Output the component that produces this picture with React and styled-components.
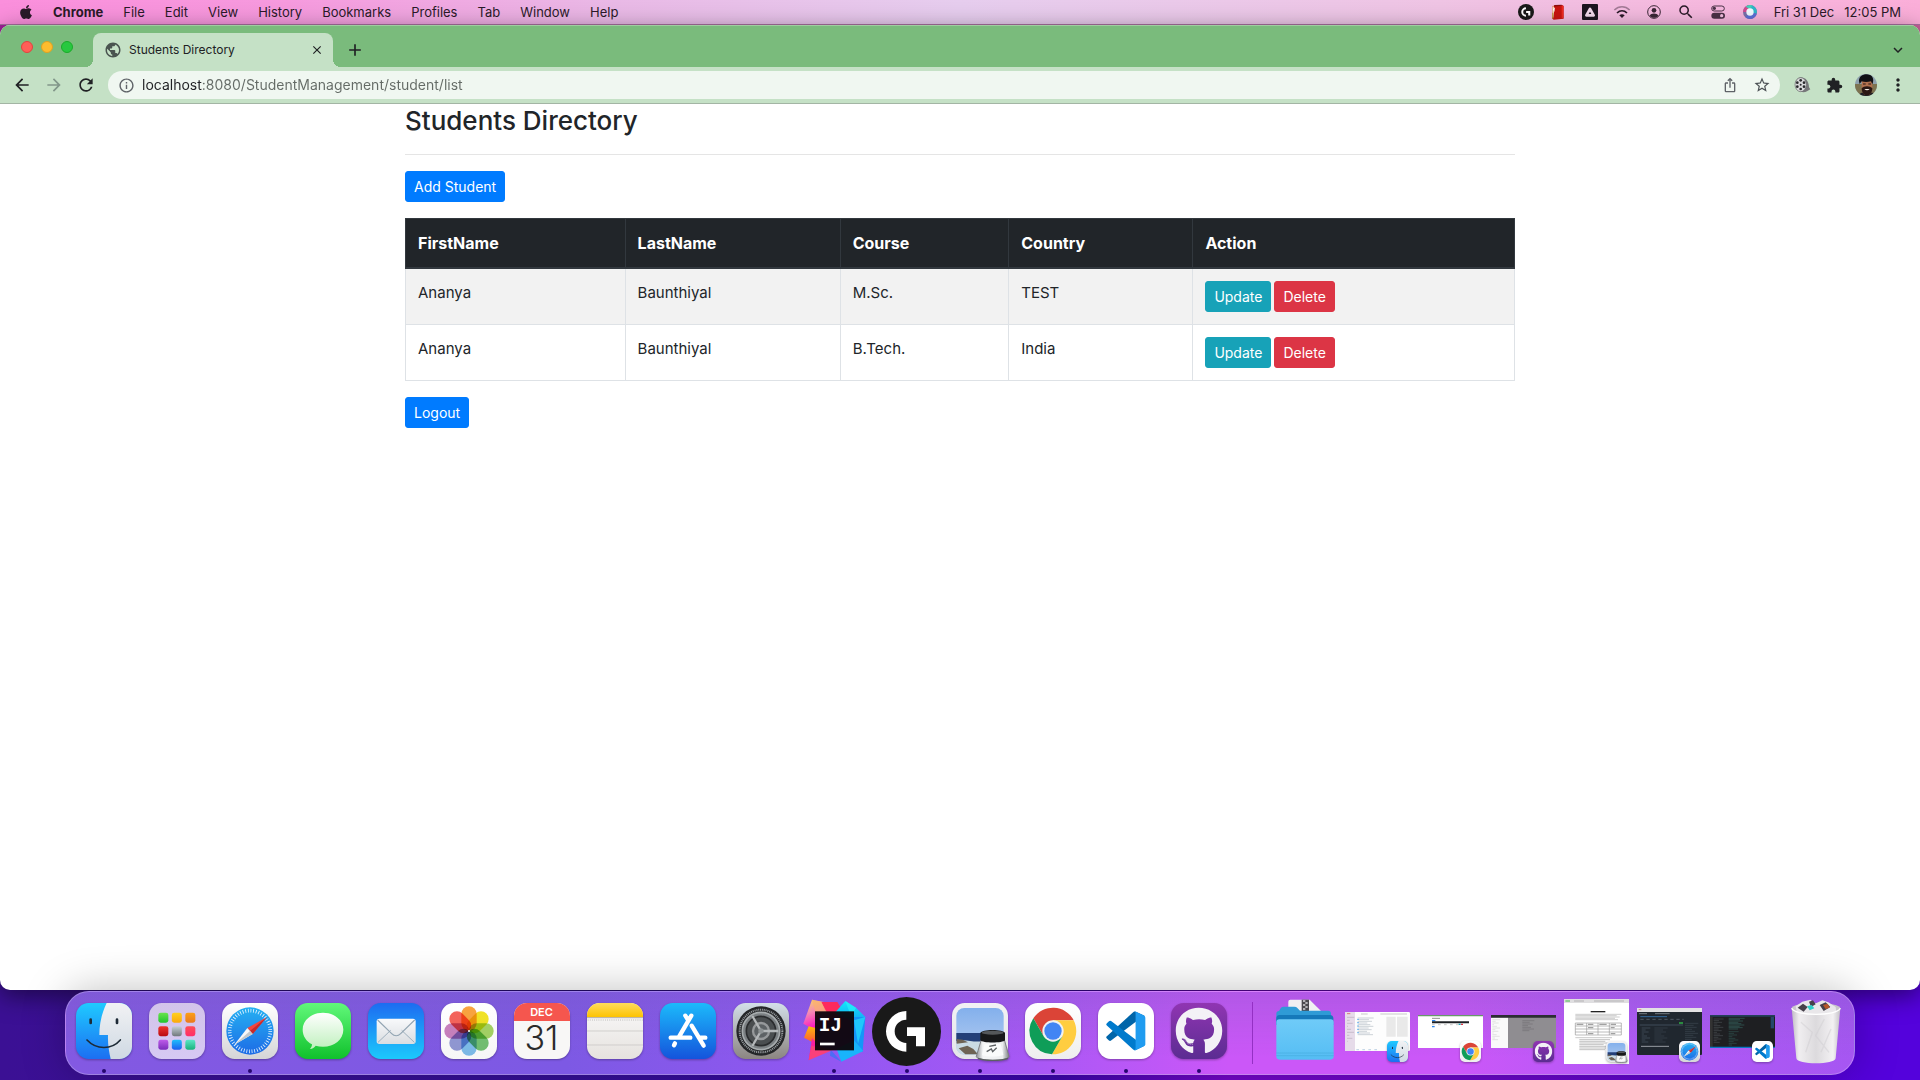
import React from 'react';
import styled, { createGlobalStyle } from 'styled-components';
import { FaApple, FaGithub } from 'react-icons/fa';
import {
  MdAdd, MdArrowBack, MdArrowForward, MdClose, MdExpandMore, MdExtension, MdInfoOutline,
  MdIosShare, MdMoreVert, MdPublic, MdRefresh, MdSearch, MdStarBorder,
} from 'react-icons/md';

const sans = '"Inter", "Liberation Sans", sans-serif';

const GlobalStyle = createGlobalStyle`
  *, *::before, *::after { box-sizing: border-box; }
  body { margin: 0; font-family: ${sans}; color: #212529; }
  button, input { font: inherit; color: inherit; margin: 0; }
  svg { display: block; }
`;

/* ---------- desktop ---------- */

const Desktop = styled.div`
  display: flex;
  flex-direction: column;
  min-height: 100vh;
  overflow: hidden;
  background:
    linear-gradient(90deg, #a0219a, #b8488c 60%, #c8609a) 0 0 / 100% 60px no-repeat,
    linear-gradient(90deg, #3b1094 0%, #35109a 30%, #3c06ae 55%, #7606cc 64%, #6a07cc 80%, #5402dc 97%);
`;

const PlainButton = styled.button`
  display: flex;
  align-items: center;
  justify-content: center;
  flex: none;
  padding: 0;
  border: 0;
  background: none;
`;

/* ---------- menu bar ---------- */

const MenuBar = styled.header`
  display: flex;
  align-items: center;
  justify-content: space-between;
  height: 25px;
  padding: 0 19px 1px 18px;
  border-bottom: 1px solid #a8709f;
  font-size: 13px;
  line-height: 16px;
  color: #2a1a28;
  background: linear-gradient(90deg, #fb8fdc 0%, #f69ade 15%, #e9b9e6 32%, #e6cdee 50%, #efc4e4 75%, #fbaed9 100%);
`;

const MenuGroup = styled.div`
  display: flex;
  align-items: center;
  gap: ${(p) => p.$gap}px;
`;

const MenuItem = styled(PlainButton)`
  font-weight: ${(p) => (p.$strong ? 700 : 400)};
`;

const StatusButton = styled(PlainButton)`
  width: 32px;
  height: 23px;
`;

/* ---------- browser ---------- */

const Browser = styled.div`
  display: flex;
  flex-direction: column;
  flex: 1;
  position: relative;
  border-radius: 10px;
  overflow: hidden;
  background: #fff;
  box-shadow: 0 6px 24px rgba(0, 0, 0, 0.5);
`;

const TabStrip = styled.div`
  display: flex;
  align-items: flex-end;
  height: 42px;
  padding: 0 12px 0 21px;
  border-top: 1px solid #9fcda1;
  background: #7abb7c;
  color: #202124;
`;

const Lights = styled.div`
  display: flex;
  gap: 8px;
  height: 41px;
  align-items: center;
  margin-right: 20px;
`;

const Light = styled(PlainButton)`
  width: 12px;
  height: 12px;
  border-radius: 50%;
  border: 1px solid ${(p) => p.$edge};
  background: ${(p) => p.$fill};
`;

const Tab = styled.div`
  position: relative;
  display: flex;
  align-items: center;
  width: 240px;
  height: 34px;
  padding: 0 8px 0 11px;
  border-radius: 8px 8px 0 0;
  background: #c5e1c6;
  font-size: 12px;
  line-height: 16px;
  &::before, &::after {
    content: '';
    position: absolute;
    bottom: 0;
    width: 8px;
    height: 8px;
  }
  &::before { left: -8px; background: radial-gradient(circle at 0 0, transparent 8px, #c5e1c6 8px); }
  &::after { right: -8px; background: radial-gradient(circle at 100% 0, transparent 8px, #c5e1c6 8px); }
`;

const TabTitle = styled.span`
  flex: 1;
  margin-left: 7px;
`;

const TabButton = styled(PlainButton)`
  width: ${(p) => p.$width || 16}px;
  height: 34px;
  margin-left: ${(p) => p.$push || 0};
`;

const Toolbar = styled.form`
  display: flex;
  align-items: center;
  height: 37px;
  padding: 0 6px;
  border-bottom: 1px solid #a3b5a4;
  background: #c5e1c6;
  color: #202124;
`;

const ToolButton = styled(PlainButton)`
  width: 32px;
  height: 28px;
  color: ${(p) => p.$tone || '#202124'};
`;

const Omnibox = styled.div`
  display: flex;
  align-items: center;
  flex: 1;
  height: 28px;
  margin: 0 6px;
  padding: 0 2px;
  border-radius: 14px;
  background: #f0f7f1;
`;

const Address = styled.input`
  flex: 1;
  min-width: 0;
  height: 20px;
  padding: 0;
  border: 0;
  outline: 0;
  font-size: 14px;
  line-height: 20px;
  color: #646b66;
  background: linear-gradient(90deg, #202124 60px, #646b66 60px);
  -webkit-background-clip: text;
  background-clip: text;
  -webkit-text-fill-color: transparent;
`;

/* ---------- page ---------- */

const Page = styled.main`
  width: 100%;
  max-width: 1140px;
  margin: 0 auto;
  padding: 0 15px;
  font-size: 16px;
  line-height: 24px;
`;

const Title = styled.h3`
  margin: 0;
  font-size: 26px;
  font-weight: 500;
  line-height: 34px;
`;

const Rule = styled.hr`
  margin: 16px 0;
  border: 0;
  border-top: 1px solid #e5e5e5;
`;

const tones = { primary: '#007bff', info: '#17a2b8', danger: '#dc3545' };

const ActionButton = styled.button`
  display: block;
  padding: 4px 8px;
  border: 1px solid ${(p) => tones[p.$tone]};
  border-radius: 3px;
  background: ${(p) => tones[p.$tone]};
  color: #fff;
  font-size: 14px;
  line-height: 21px;
`;

const Table = styled.table`
  width: 100%;
  margin: 16px 0;
  table-layout: fixed;
  border-collapse: collapse;
  border: 1px solid #dee2e6;
  thead th {
    padding: 12px;
    border: 1px solid #32383e;
    border-bottom-width: 2px;
    background: #212529;
    color: #fff;
    font-weight: 700;
    text-align: left;
  }
  tbody td {
    padding: 12px;
    border: 1px solid #dee2e6;
    font-size: 15px;
    vertical-align: top;
  }
  tbody tr:nth-child(odd) { background: #f2f2f2; }
`;

const Col = styled.col`
  width: ${(p) => p.$share}%;
`;

const Actions = styled.div`
  display: flex;
  gap: 3px;
`;

/* ---------- dock ---------- */

const DockArea = styled.footer`
  display: flex;
  justify-content: center;
  position: relative;
  padding: 1px 0 5px;
`;

const Dock = styled.nav`
  display: flex;
  height: 84px;
  padding: 0 2px 0 1px;
  border: 1px solid rgba(255, 255, 255, 0.25);
  border-radius: 24px;
  background:
    linear-gradient(180deg, rgba(120, 90, 190, 0.3), rgba(140, 90, 255, 0) 80%),
    linear-gradient(90deg, #8359e2 0%, #7d59e4 28%, #9257f2 43%, #a858f5 54%, #cb57f8 65%, #cb57f8 78%, #b159f6 88%, #a656f2 100%);
  box-shadow: 0 0 44px rgba(0, 0, 0, 0.26);
`;

const DockItem = styled(PlainButton)`
  position: relative;
  width: 73px;
  height: 78px;
`;

const RunningDot = styled.span`
  position: absolute;
  bottom: -3px;
  left: 35px;
  width: 4px;
  height: 4px;
  border-radius: 50%;
  background: #25066e;
`;

const Badge = styled.span`
  position: absolute;
  left: 46px;
  top: 49px;
`;

const Divider = styled.span`
  width: 1px;
  height: 62px;
  margin: 10px 15px 0 17px;
  background: #9430c4;
`;

const CalendarTile = styled.span`
  display: flex;
  flex-direction: column;
  width: 56px;
  height: 56px;
  border-radius: 13px;
  overflow: hidden;
  background: #f8f7f6;
  box-shadow: 0 1px 2px rgba(0, 0, 0, 0.3);
  text-align: center;
`;

const CalendarMonth = styled.span`
  height: 18px;
  background: #f5564e;
  color: #fff;
  font-size: 11px;
  font-weight: 600;
  line-height: 19px;
`;

const CalendarDay = styled.span`
  color: #2b2b2b;
  font-size: 34px;
  font-weight: 300;
  line-height: 34px;
`;

/* ---------- drawings ---------- */

const Grad = ({ id, from, to }) => (
  <linearGradient id={id} x1="0" y1="0" x2="0" y2="1">
    <stop offset="0" stopColor={from} />
    <stop offset="1" stopColor={to} />
  </linearGradient>
);

const TileSvg = styled.svg`
  overflow: visible;
  filter: drop-shadow(0 1px 1px rgba(0, 0, 0, 0.3));
`;

function Tile({ size = 56, id, from, to, children }) {
  return (
    <TileSvg width={size} height={size} viewBox="0 0 168 168" aria-hidden="true">
      <defs><Grad id={id} from={from} to={to} /></defs>
      <rect width="168" height="168" rx="38" fill={`url(#${id})`} />
      {children}
    </TileSvg>
  );
}

const Finder = ({ size }) => (
  <Tile size={size} id="finder" from="#1fcaff" to="#1c6ff2">
    <defs><Grad id="finderFace" from="#f1f2f4" to="#cfd9e3" /></defs>
    <path d="M92 0C78 28 70 62 70 96h26c-1 26 3 50 8 72h26a38 38 0 0 0 38-38V38A38 38 0 0 0 130 0z" fill="url(#finderFace)" />
    <rect x="40" y="46" width="8" height="18" rx="4" fill="#1d2a36" />
    <rect x="119" y="46" width="8" height="18" rx="4" fill="#1d2a36" />
    <path d="M33 111c28 30 74 30 100 0" fill="none" stroke="#1d2a36" strokeWidth="5" strokeLinecap="round" />
  </Tile>
);

const padColors = [
  ['#6be34f', '#22c52e'], ['#ffd022', '#fba90a'], ['#fca016', '#ea7a1e'],
  ['#f0342d', '#b80c12'], ['#c6d0d6', '#70787c'], ['#ff4d55', '#ff2d6a'],
  ['#bf5cea', '#7a2dbb'], ['#1fc0fb', '#1d5ff0'], ['#5be6c8', '#19b37c'],
];

const Launchpad = () => (
  <Tile id="pad" from="#d3c4ea" to="#d6c9f3">
    {padColors.map(([a, b], i) => (
      <g key={a}>
        <defs><Grad id={`pad${i}`} from={a} to={b} /></defs>
        <rect x={28 + (i % 3) * 40.5} y={29 + Math.floor(i / 3) * 40.5} width="30" height="30" rx="7" fill={`url(#pad${i})`} />
      </g>
    ))}
  </Tile>
);

const Safari = ({ size }) => (
  <Tile size={size} id="safari" from="#ffffff" to="#d5d5d7">
    <defs><Grad id="safariSea" from="#25b0f2" to="#1d6be6" /></defs>
    <circle cx="84" cy="84" r="71" fill="url(#safariSea)" />
    <circle cx="84" cy="84" r="61" fill="none" stroke="#e8f4ff" strokeWidth="11" strokeDasharray="2.4 5.58" />
    <path d="M134 43 76 75l16 18z" fill="#f2453d" />
    <path d="M134 43 84 84l8 9z" fill="#c62a2c" />
    <path d="M37 125 76 75l16 18z" fill="#f6f7f8" />
    <path d="M37 125 84 84l8 9z" fill="#c2c8cc" />
  </Tile>
);

const Messages = () => (
  <Tile id="msg" from="#61f87a" to="#10c12c">
    <defs><Grad id="msgBubble" from="#ffffff" to="#bff0bd" /></defs>
    <path d="M84 29c34 0 61 22 61 51s-27 51-61 51c-8 0-15-1-22-3-4 5-9 9-17 10 4-4 6-9 6-14-17-9-28-25-28-44 0-29 27-51 61-51z" fill="url(#msgBubble)" />
  </Tile>
);

const Mail = () => (
  <Tile id="mail" from="#1d6cf1" to="#1cc9fc">
    <defs><Grad id="mailPaper" from="#f8f9fb" to="#dadde1" /></defs>
    <rect x="26" y="47" width="117" height="76" rx="8" fill="url(#mailPaper)" />
    <path d="M30 118 68 82M139 118 101 82" stroke="#9fb0bd" strokeWidth="3" fill="none" />
    <path d="m29 51 42 41c8 8 19 8 27 0l42-41" stroke="#93a5b3" strokeWidth="3.5" fill="none" />
  </Tile>
);

const petals = ['#f8941d', '#f0df00', '#95cc4a', '#5bb85a', '#68b3ea', '#8088cf', '#c06cb4', '#f4483f'];

const Petal = styled.rect`
  mix-blend-mode: multiply;
`;

const Photos = () => (
  <Tile id="photos" from="#ffffff" to="#f6f6f6">
    {petals.map((c, i) => (
      <Petal key={c} x="61" y="10" width="46" height="74" rx="23" fill={c} opacity="0.85" transform={`rotate(${i * 45} 84 84)`} />
    ))}
    <circle cx="84" cy="84" r="3" fill="#fff" />
  </Tile>
);

const Calendar = () => (
  <CalendarTile>
    <CalendarMonth>DEC</CalendarMonth>
    <CalendarDay>31</CalendarDay>
  </CalendarTile>
);

const Notes = () => (
  <Tile id="notes" from="#fafafa" to="#e6e2de">
    <defs><Grad id="notesTop" from="#ffdc5c" to="#fdc300" /></defs>
    <path d="M0 42V38A38 38 0 0 1 38 0h92a38 38 0 0 1 38 38v4z" fill="url(#notesTop)" />
    <path d="M0 44h168" stroke="#b5aa98" strokeWidth="3" />
    <path d="M2 51h166" stroke="#a8a6a3" strokeWidth="2.5" strokeDasharray="2.5 4" />
    <path d="M0 84h168M0 126h168" stroke="#cbc9c6" strokeWidth="2.5" />
  </Tile>
);

const AppStore = () => (
  <Tile id="store" from="#1cbafb" to="#1454dc">
    <g stroke="#fff" strokeWidth="13" strokeLinecap="round" fill="none">
      <path d="M94 38 56 103M76 38l7 11M95 68l36 60M32 104h59M120 104h16M45 121l-3 6" />
    </g>
  </Tile>
);

const Settings = () => (
  <Tile id="prefs" from="#d3dfe8" to="#8b8581">
    <circle cx="84" cy="84" r="74" fill="#242628" />
    <circle cx="84" cy="84" r="64" fill="none" stroke="#9a9fa2" strokeWidth="6" strokeDasharray="3 2.6" />
    <circle cx="84" cy="84" r="56" fill="#7b8083" stroke="#a7acae" strokeWidth="5" />
    <circle cx="84" cy="84" r="44" fill="#4a4e50" stroke="#2a2c2e" strokeWidth="5" />
    <circle cx="84" cy="84" r="24" fill="#5d6265" stroke="#96999b" strokeWidth="7" />
    <path d="M84 84h52M84 84 58 39M84 84l-26 45" stroke="#b3b7b9" strokeWidth="7" />
    <circle cx="84" cy="84" r="8" fill="#8e9395" />
  </Tile>
);

const IntelliJ = () => (
  <svg width="68" height="68" viewBox="0 110 204 204" aria-hidden="true">
    <defs>
      <linearGradient id="ijPink" x1="0" y1="0" x2="0.4" y2="1">
        <stop offset="0" stopColor="#fbdc5a" /><stop offset="0.4" stopColor="#f58ab4" /><stop offset="0.8" stopColor="#fb1fc0" />
      </linearGradient>
      <Grad id="ijBlue" from="#12e8f8" to="#12a8f8" />
      <Grad id="ijOrange" from="#ffb80a" to="#ff4a3c" />
    </defs>
    <path d="m36 118 40 8 40 40-60 50-46-26z" fill="url(#ijPink)" />
    <path d="m64 125 48 0 18 30H78z" fill="#fe2a5c" />
    <path d="m36 118 28 7 16 30H46z" fill="#fbb06a" opacity="0.7" />
    <path d="m104 158 32-36 32 20 28 28-34 14z" fill="url(#ijBlue)" />
    <path d="m136 122 32 20-14 28z" fill="#26f0fa" opacity="0.7" />
    <path d="m150 170 46 0-8 104-26 0z" fill="#1496f8" />
    <path d="m162 180 34-10-22 80z" fill="#1fc8fb" />
    <path d="m162 240 28 32-66 32-14-38z" fill="#18b4fb" />
    <path d="m12 232 14-34 24 6 4 50z" fill="url(#ijOrange)" />
    <path d="m36 234 30 30-40 36z" fill="#fb1fa0" />
    <path d="m34 256 66 12-74 32z" fill="#f9407a" />
    <path d="m92 268 32 36-34-18z" fill="#4d6cf5" />
    <rect x="45" y="153" width="117" height="117" fill="#0c0508" opacity="0.95" />
    <text x="56" y="212" fill="#fff" fontFamily="'Liberation Mono', monospace" fontWeight="700" fontSize="58">IJ</text>
    <path d="M60 247h44v8H60z" fill="#fff" />
  </svg>
);

const LogitechG = ({ size }) => (
  <svg width={size} height={size} viewBox="219 108 207 207" aria-hidden="true">
    <circle cx="322.500" cy="211.500" r="103.500" fill="#191919" />
    <path d="M322 150a61 61 0 0 0 0 122v-26a35 35 0 0 1 0-70zM324 199h54v57h-27v-31h-27z" fill="#fff" />
  </svg>
);

const Preview = ({ size }) => (
  <Tile size={size} id="preview" from="#f2f2f4" to="#e4e5e8">
    <defs>
      <Grad id="previewSky" from="#83b0ec" to="#b5cdf0" />
      <linearGradient id="glass" x1="0" y1="0" x2="1" y2="0">
        <stop offset="0" stopColor="#8d9094" /><stop offset="0.2" stopColor="#f4f5f6" />
        <stop offset="0.8" stopColor="#eceeef" /><stop offset="1" stopColor="#7b7e82" />
      </linearGradient>
    </defs>
    <rect x="13" y="15" width="142" height="140" rx="24" fill="url(#previewSky)" />
    <path d="M13 90h142v30H13z" fill="#233f78" />
    <path d="M13 114c30-8 50 6 80 0s40 0 62-2v24a20 20 0 0 1-20 19H37a24 24 0 0 1-24-24z" fill="#c9dbe4" />
    <path d="M14 108l18 2 16 8-34 4zM20 136l26-8 18 10 14 16H40z" fill="#6e6354" />
    <path d="M88 110 73 160c-3 14 96 18 98 0l-14-50z" fill="url(#glass)" stroke="#7d8084" strokeWidth="3" />
    <path d="M98 122h48l8 34c-20 6-48 6-64 0z" fill="#fafbfb" />
    <path d="m104 146 14-8 4 8 12-12M112 130l20-4" fill="none" stroke="#5c6063" strokeWidth="4" />
    <path d="M78 166c20 8 68 8 90 0" fill="none" stroke="#5c6063" strokeWidth="4" />
    <path d="M85 90c4-12 70-12 74 0v22c-6 9-68 9-74 0z" fill="#17181a" />
    <ellipse cx="122" cy="89" rx="33" ry="6" fill="#55585b" />
  </Tile>
);

const Chrome = ({ size }) => (
  <Tile size={size} id="chrome" from="#ffffff" to="#eeeeee">
    <path d="M25 46A70 70 0 0 1 146 52H84L56 100z" fill="#db4437" />
    <path d="M146 52A70 70 0 0 1 81 154l31-54-28-48z" fill="#ffcd40" />
    <path d="M81 154A70 70 0 0 1 25 46l31 54h56z" fill="#0f9d58" />
    <circle cx="84" cy="84" r="32" fill="#f1f1f1" />
    <circle cx="84" cy="84" r="26" fill="#4285f4" />
  </Tile>
);

const VSCode = ({ size }) => (
  <Tile size={size} id="vscode" from="#ffffff" to="#ffffff">
    <g transform="translate(25 25) scale(1.170)">
      <path d="M96.460 10.800 75.860.880a6.230 6.230 0 0 0-7.100 1.210L1.300 63.580a4.170 4.170 0 0 0 0 6.170l5.510 5a4.170 4.170 0 0 0 5.320.240l81.240-61.630A4.100 4.100 0 0 1 100 16.600v-.240a6.250 6.250 0 0 0-3.540-5.560z" fill="#0065a9" />
      <path d="m96.460 89.200-20.600 9.920a6.230 6.230 0 0 1-7.100-1.210L1.300 36.420a4.170 4.170 0 0 1 0-6.170l5.510-5a4.170 4.170 0 0 1 5.320-.240l81.240 61.630A4.100 4.100 0 0 0 100 83.400v.240a6.250 6.250 0 0 1-3.540 5.560z" fill="#007acc" />
      <path d="M75.860 99.130a6.230 6.230 0 0 1-7.110-1.210A3.660 3.660 0 0 0 75 95.330V4.670a3.660 3.660 0 0 0-6.250-2.590A6.230 6.230 0 0 1 75.860.870l20.600 9.910A6.250 6.250 0 0 1 100 16.410v67.180a6.250 6.250 0 0 1-3.540 5.630z" fill="#1f9cf0" />
    </g>
  </Tile>
);

const GitHub = ({ size }) => (
  <Tile size={size} id="github" from="#9035b2" to="#5b2c92">
    <FaGithub x="12" y="12" width="144" height="144" size={144} color="#f3f1f6" />
  </Tile>
);

const Folder = () => (
  <svg width="60" height="64" viewBox="0 0 180 192" aria-hidden="true">
    <defs><Grad id="folder" from="#6fcbf8" to="#55bdf4" /></defs>
    <path d="M40 8q0-6 6-6h58l34 34v20H40z" fill="#f0eff2" />
    <path d="M80 2h22v34H80z" fill="#4a4a4e" />
    <path d="M84 6h7M91 12h7M84 18h7M91 24h7M84 30h7" stroke="#d8d8da" strokeWidth="4" />
    <path d="M4 44q0-8 8-8l6-10q3-3 8-3h32q6 0 9 4l8 8h84q9 0 9 9v30H4z" fill="#2f9bd6" />
    <path d="M4 58q0-10 10-10h150q11 0 11 10v20H4z" fill="#1579ba" />
    <path d="M4 70q0-9 9-9h154q9 0 9 9v102q0 10-10 10H14q-10 0-10-10z" fill="url(#folder)" />
    <path d="M4 162h172M4 170h172" stroke="#46acdf" strokeWidth="2" />
  </svg>
);

const rows = (n, x, y, step, w) => Array.from({ length: n }, (_, i) => `M${x} ${y + i * step}h${w - ((i * 37) % 23)}`).join('');

const FinderWindow = () => (
  <svg width="65" height="39" viewBox="0 0 195 117" aria-hidden="true">
    <rect width="195" height="117" rx="4" fill="#fdfdfd" />
    <path d="M0 0h30v117H0z" fill="#e6dbe9" />
    <path d="M6 5h10" stroke="#d97a78" strokeWidth="3" />
    <path d="M48 6h20M106 6h80" stroke="#c9c9c9" strokeWidth="3" />
    <path d={rows(9, 6, 16, 9, 22)} stroke="#b9aebc" strokeWidth="2" />
    <path d={rows(11, 38, 18, 5, 48)} stroke="#b4bdc6" strokeWidth="2" />
    <path d="M36 22h6M36 32h6M36 42h6M36 52h6M36 62h6" stroke="#3f9ff0" strokeWidth="3" opacity="0.7" />
    <path d="M124 14h28v60h-28zM156 14h32v60h-32z" fill="#e9e9e9" />
    <path d="M34 113h70" stroke="#9dbbd6" strokeWidth="2" strokeDasharray="8 10" />
  </svg>
);

const ChromeWindow = () => (
  <svg width="65" height="33" viewBox="0 0 195 99" aria-hidden="true">
    <rect width="195" height="99" fill="#fff" />
    <path d="M0 0h195v4H0z" fill="#67996a" />
    <path d="M42 10h24" stroke="#555" strokeWidth="2" />
    <path d="M42 17h10M42 35h8" stroke="#2d86f0" strokeWidth="4" />
    <path d="M42 22h111" stroke="#1d2024" strokeWidth="6" />
    <path d="M42 29h80" stroke="#aaa" strokeWidth="2" strokeDasharray="8 10" />
    <path d="M122 28h6" stroke="#17a2b8" strokeWidth="4" />
    <path d="M129 28h6" stroke="#dc3545" strokeWidth="4" />
  </svg>
);

const GitHubWindow = () => (
  <svg width="65" height="33" viewBox="0 0 195 99" aria-hidden="true">
    <rect width="195" height="99" fill="#8f8d91" />
    <path d="M0 7h51v92H0z" fill="#fafafa" />
    <path d="M0 0h195v8H0z" fill="#2b2d33" />
    <path d={rows(13, 4, 14, 5, 24)} stroke="#d6d6d6" strokeWidth="2" />
    <path d={rows(7, 94, 17, 5, 36)} stroke="#737176" strokeWidth="2" />
  </svg>
);

const DocumentWindow = () => (
  <svg width="65" height="65" viewBox="0 0 195 195" aria-hidden="true">
    <rect width="195" height="195" fill="#fff" />
    <path d="M0 0h195v12H0z" fill="#dfdee0" />
    <path d="M4 6h14" stroke="#6bc46d" strokeWidth="4" />
    <path d="M30 6h30M90 6h90" stroke="#b3b2b4" strokeWidth="3" />
    <path d="M80 38h44" stroke="#222" strokeWidth="4" />
    <path d={rows(5, 34, 46, 4, 138)} stroke="#b5b5b5" strokeWidth="2" />
    <path d="M34 72h138v36H34zM34 81h138M34 90h138M34 99h138M68 72v36M102 72v36M136 72v36" fill="none" stroke="#9a9a9a" strokeWidth="2" />
    <path d="M38 76h20M72 76h16M106 76h22M140 76h16M72 86h16M140 86h12M72 104h16M140 104h14" stroke="#555" strokeWidth="2" />
    <path d="M34 116h110" stroke="#b0b0b0" strokeWidth="2" />
    <path d={rows(7, 46, 122, 5, 92)} stroke="#a2a2a2" strokeWidth="2" />
  </svg>
);

const SafariWindow = () => (
  <svg width="65" height="47" viewBox="0 0 195 141" aria-hidden="true">
    <rect width="195" height="141" rx="3" fill="#20272f" />
    <path d="M0 0h195v12H0z" fill="#e3e2e4" />
    <path d="M5 5h8" stroke="#df8a86" strokeWidth="3" />
    <path d="M6 17h24M54 17h44" stroke="#9aa3ab" strokeWidth="2" />
    <path d="M10 26h80" stroke="#3e8ad0" strokeWidth="2" />
    <path d="M10 34h130" stroke="#66717c" strokeWidth="2" strokeDasharray="10 8" />
    <path d="M8 48h130v6H8z" fill="#2f3944" />
    <path d="M126 45h12" stroke="#2ea043" strokeWidth="5" />
    <path d={rows(8, 14, 60, 6, 26)} stroke="#485564" strokeWidth="2" />
    <path d={rows(8, 52, 60, 6, 40)} stroke="#3a444f" strokeWidth="2" />
    <path d={rows(10, 144, 46, 6, 40)} stroke="#3c4751" strokeWidth="2" />
    <path d="M12 115h84" stroke="#d5dade" strokeWidth="2" />
  </svg>
);

const CodeWindow = () => (
  <svg width="65" height="33" viewBox="0 0 195 99" aria-hidden="true">
    <rect width="195" height="99" fill="#1e1f22" />
    <path d="M0 0h195v5H0z" fill="#24405a" />
    <path d="M0 5h8v91H0z" fill="#333" />
    <path d={rows(15, 11, 12, 5, 30)} stroke="#494d51" strokeWidth="2" />
    <path d={rows(9, 56, 10, 4, 48)} stroke="#35645d" strokeWidth="2" />
    <path d={rows(9, 56, 50, 5, 30)} stroke="#2f524e" strokeWidth="2" />
    <path d="M182 6h10v34h-10z" fill="#24486a" />
    <path d="M0 97h195" stroke="#0b76c4" strokeWidth="4" />
  </svg>
);

const Trash = () => (
  <svg width="50" height="65" viewBox="0 0 150 195" aria-hidden="true">
    <defs>
      <linearGradient id="bin" x1="0" y1="0" x2="1" y2="0">
        <stop offset="0" stopColor="#bfbcc2" /><stop offset="0.15" stopColor="#f0eef0" />
        <stop offset="0.5" stopColor="#dcdadd" /><stop offset="0.85" stopColor="#f3f1f3" />
        <stop offset="1" stopColor="#c3c0c6" />
      </linearGradient>
    </defs>
    <ellipse cx="75" cy="28" rx="73" ry="16" fill="#c9c6cc" />
    <path d="m14 22 20-14 24-6 14 12 22-10 18 6 22 14 2 16-60 12-58-10z" fill="#e9e7ea" />
    <path d="m20 26 16-12 14 10-12 14zM54 8l12-4 8 12-14 8zM86 18l18-8 14 14-20 12z" fill="#45404a" />
    <path d="m48 22 14-4 8 10-14 6z" fill="#2fd0c8" />
    <path d="m96 18 14-4 6 12-12 4z" fill="#b5562a" />
    <path d="M2 28c10 24 136 24 146 0l-14 150c-2 20-116 20-118 0z" fill="url(#bin)" />
    <path d="M2 28c10 24 136 24 146 0" fill="none" stroke="#fff" strokeWidth="4" />
    <path d="m30 70 34 30-20 60M100 60l-26 50 40 50M120 90l-30 70" fill="none" stroke="#d0cdd2" strokeWidth="4" opacity="0.5" />
  </svg>
);

const Book = () => (
  <svg width="14" height="16" viewBox="0 0 42 48" aria-hidden="true">
    <path d="M4 6 34 3l4 3v38L8 47l-4-3z" fill="#c8140f" />
    <path d="M32 6h5v36l-5 1z" fill="#ee2a20" />
    <path d="M4 7h5v20l-2 14-3-1z" fill="#f3e2b8" />
    <path d="m6 16 6-6-2 14z" fill="#fff" />
    <path d="M4 26h3v18H4z" fill="#b08a2a" />
    <path d="m10 3 22-1v3L8 8z" fill="#8d0f0c" />
  </svg>
);

const DriveBox = () => (
  <svg width="16" height="16" viewBox="0 0 48 48" aria-hidden="true">
    <rect width="48" height="48" rx="3" fill="#1c1420" />
    <path d="m24 15 11 19H13z" fill="none" stroke="#f2d8ec" strokeWidth="8" strokeLinejoin="round" />
  </svg>
);

const Wifi = () => (
  <svg width="18" height="14" viewBox="0 0 54 42" fill="none" strokeWidth="5" aria-hidden="true">
    <path d="M4 15c14-13 32-13 46 0" stroke="#2a1a28" opacity="0.4" />
    <path d="M12 24c9-9 21-9 30 0" stroke="#2a1a28" />
    <path d="m27 39-8-8c5-4 11-4 16 0z" fill="#2a1a28" />
  </svg>
);

const UserBadge = () => (
  <svg width="14" height="14" viewBox="0 0 42 42" aria-hidden="true">
    <circle cx="21" cy="21" r="19" fill="none" stroke="#3a2636" strokeWidth="3" />
    <circle cx="21" cy="16" r="7" fill="#3a2636" />
    <path d="M8 32c3-9 23-9 26 0-7 8-19 8-26 0z" fill="#3a2636" />
  </svg>
);

const ControlCenter = () => (
  <svg width="14" height="14" viewBox="0 0 42 42" aria-hidden="true">
    <rect x="2" y="3" width="38" height="15" rx="7.500" fill="none" stroke="#4a3146" strokeWidth="3" />
    <circle cx="10" cy="10" r="5" fill="#4a3146" />
    <rect x="1" y="23" width="41" height="18" rx="9" fill="#4a3146" />
    <circle cx="32" cy="32" r="5" fill="#f2bfe0" />
  </svg>
);

const Siri = () => (
  <svg width="14" height="14" viewBox="0 0 42 42" aria-hidden="true">
    <circle cx="21" cy="21" r="21" fill="#7a6fa8" />
    <path d="M21 0a21 21 0 0 1 20 26L21 21z" fill="#2fb8c8" />
    <path d="M41 26a21 21 0 0 1-34 11l14-16z" fill="#5a6fd6" />
    <path d="M0 21A21 21 0 0 1 21 0v21z" fill="#d24a8e" />
    <path d="M8 5a21 21 0 0 1 20-4l-7 12z" fill="#46d0b8" />
    <circle cx="21" cy="21" r="11" fill="#f2fbff" />
  </svg>
);

const FilmReel = () => (
  <svg width="18" height="18" viewBox="0 0 54 54" aria-hidden="true">
    <path d="M22 4c16 0 26 12 26 30l4 6-10 6c-10 6-30 2-34-12-5-14 2-28 14-30z" fill="#77787a" />
    <ellipse cx="23" cy="26" rx="17" ry="21" fill="#d9dadb" stroke="#6a6b6d" strokeWidth="2" />
    <g fill="#2a2b2d">
      <circle cx="23" cy="13" r="4" /><circle cx="33" cy="20" r="4" /><circle cx="33" cy="32" r="4" />
      <circle cx="23" cy="39" r="4" /><circle cx="13" cy="32" r="4" /><circle cx="13" cy="20" r="4" /><circle cx="23" cy="26" r="3" />
    </g>
  </svg>
);

const Avatar = () => (
  <svg width="22" height="22" viewBox="0 0 66 66" aria-hidden="true">
    <defs><clipPath id="face"><circle cx="33" cy="33" r="33" /></clipPath></defs>
    <g clipPath="url(#face)">
      <rect width="66" height="66" fill="#8fa2ae" />
      <path d="M0 30h66v36H0z" fill="#7d7350" />
      <path d="M10 66c4-10 14-12 26-12s22 2 28 12z" fill="#1d2028" />
      <path d="M20 20h32v24c0 12-7 19-16 19s-16-7-16-19z" fill="#b0704e" />
      <path d="M20 42c4-2 8-5 16-5s12 3 16 5c0 14-6 22-16 22s-16-8-16-22z" fill="#2a1814" />
      <path d="M28 45c5 5 11 5 16 0z" fill="#f6efe8" />
      <path d="M14 30C6 8 24-2 38 1c16 2 20 16 14 30l-4-9c-10 3-20 3-28 0z" fill="#101014" />
      <path d="M24 30h8M40 30h8" stroke="#2a1814" strokeWidth="3" />
    </g>
  </svg>
);

/* ---------- data ---------- */

const menus = ['File', 'Edit', 'View', 'History', 'Bookmarks', 'Profiles', 'Tab', 'Window', 'Help'];

const status = [
  ['Logitech G Hub', <LogitechG size={16} />],
  ['Notes', <Book />],
  ['Drive', <DriveBox />],
  ['Wi-Fi', <Wifi />],
  ['User', <UserBadge />],
  ['Search', <MdSearch size={18} />],
  ['Control Centre', <ControlCenter />],
  ['Siri', <Siri />],
];

const columns = [
  ['FirstName', 19.8], ['LastName', 19.4], ['Course', 15.2], ['Country', 16.6], ['Action', 29],
];

const students = [
  ['Ananya', 'Baunthiyal', 'M.Sc.', 'TEST'],
  ['Ananya', 'Baunthiyal', 'B.Tech.', 'India'],
];

const apps = [
  ['Finder', <Finder />, true],
  ['Launchpad', <Launchpad />],
  ['Safari', <Safari />, true],
  ['Messages', <Messages />],
  ['Mail', <Mail />],
  ['Photos', <Photos />],
  ['Calendar', <Calendar />],
  ['Notes', <Notes />],
  ['App Store', <AppStore />],
  ['System Preferences', <Settings />],
  ['IntelliJ IDEA', <IntelliJ />, true],
  ['Logitech G Hub', <LogitechG size={69} />, true],
  ['Preview', <Preview />, true],
  ['Chrome', <Chrome />, true],
  ['Visual Studio Code', <VSCode />, true],
  ['GitHub Desktop', <GitHub />, true],
];

const windows = [
  ['Downloads', <Folder />],
  ['Finder window', <FinderWindow />, <Finder size={21} />],
  ['Chrome window', <ChromeWindow />, <Chrome size={21} />],
  ['GitHub window', <GitHubWindow />, <GitHub size={21} />],
  ['Preview window', <DocumentWindow />, <Preview size={21} />],
  ['Safari window', <SafariWindow />, <Safari size={21} />],
  ['Code window', <CodeWindow />, <VSCode size={21} />],
  ['Bin', <Trash />],
];

export default function App() {
  return (
    <Desktop>
      <GlobalStyle />
      <MenuBar>
        <MenuGroup $gap={20}>
          <MenuGroup $gap={19}>
            <MenuItem aria-label="Apple menu"><FaApple size={16} /></MenuItem>
            <MenuItem $strong>Chrome</MenuItem>
          </MenuGroup>
          {menus.map((m) => <MenuItem key={m}>{m}</MenuItem>)}
        </MenuGroup>
        <MenuGroup $gap={8}>
          <MenuGroup $gap={0}>
            {status.map(([name, icon]) => <StatusButton key={name} type="button" aria-label={name}>{icon}</StatusButton>)}
          </MenuGroup>
          <MenuGroup $gap={10}>
            <MenuItem>Fri 31 Dec</MenuItem>
            <MenuItem>12:05 PM</MenuItem>
          </MenuGroup>
        </MenuGroup>
      </MenuBar>

      <Browser>
        <TabStrip>
          <Lights>
            <Light aria-label="Close window" $fill="#ff5f57" $edge="#e0443e" />
            <Light aria-label="Minimise window" $fill="#febc2e" $edge="#dea123" />
            <Light aria-label="Zoom window" $fill="#28c840" $edge="#1aab29" />
          </Lights>
          <Tab>
            <MdPublic size={18} color="#4a5450" />
            <TabTitle>Students Directory</TabTitle>
            <TabButton aria-label="Close tab"><MdClose size={14} /></TabButton>
          </Tab>
          <TabButton $width={44} aria-label="New tab"><MdAdd size={20} /></TabButton>
          <TabButton $width={20} $push="auto" aria-label="Search tabs"><MdExpandMore size={18} /></TabButton>
        </TabStrip>
        <Toolbar onSubmit={(e) => e.preventDefault()}>
          <ToolButton type="button" aria-label="Back"><MdArrowBack size={20} /></ToolButton>
          <ToolButton type="button" aria-label="Forward" $tone="#82978a"><MdArrowForward size={20} /></ToolButton>
          <ToolButton type="button" aria-label="Reload"><MdRefresh size={20} /></ToolButton>
          <Omnibox>
            <ToolButton type="button" aria-label="Site information" $tone="#5f6368"><MdInfoOutline size={17} /></ToolButton>
            <Address aria-label="Address" defaultValue="localhost:8080/StudentManagement/student/list" />
            <ToolButton type="button" aria-label="Share" $tone="#5f6368"><MdIosShare size={16} /></ToolButton>
            <ToolButton type="button" aria-label="Bookmark" $tone="#4d5256"><MdStarBorder size={18} /></ToolButton>
          </Omnibox>
          <ToolButton type="button" aria-label="Film reel"><FilmReel /></ToolButton>
          <ToolButton type="button" aria-label="Extensions"><MdExtension size={17} /></ToolButton>
          <ToolButton type="button" aria-label="Profile"><Avatar /></ToolButton>
          <ToolButton type="button" aria-label="More"><MdMoreVert size={20} /></ToolButton>
        </Toolbar>
        <Page>
          <Title>Students Directory</Title>
          <Rule />
          <ActionButton $tone="primary">Add Student</ActionButton>
          <Table>
            <colgroup>{columns.map(([name, share]) => <Col key={name} $share={share} />)}</colgroup>
            <thead>
              <tr>{columns.map(([name]) => <th key={name} scope="col">{name}</th>)}</tr>
            </thead>
            <tbody>
              {students.map((cells) => (
                <tr key={cells.join()}>
                  {cells.map((c) => <td key={c}>{c}</td>)}
                  <td>
                    <Actions>
                      <ActionButton $tone="info">Update</ActionButton>
                      <ActionButton $tone="danger">Delete</ActionButton>
                    </Actions>
                  </td>
                </tr>
              ))}
            </tbody>
          </Table>
          <ActionButton $tone="primary">Logout</ActionButton>
        </Page>
      </Browser>

      <DockArea>
        <Dock aria-label="Dock">
          {apps.map(([name, icon, running]) => (
            <DockItem key={name} aria-label={name}>
              {icon}
              {running && <RunningDot />}
            </DockItem>
          ))}
          <Divider />
          {windows.map(([name, icon, badge]) => (
            <DockItem key={name} aria-label={name}>
              {icon}
              {badge && <Badge>{badge}</Badge>}
            </DockItem>
          ))}
        </Dock>
      </DockArea>
    </Desktop>
  );
}
